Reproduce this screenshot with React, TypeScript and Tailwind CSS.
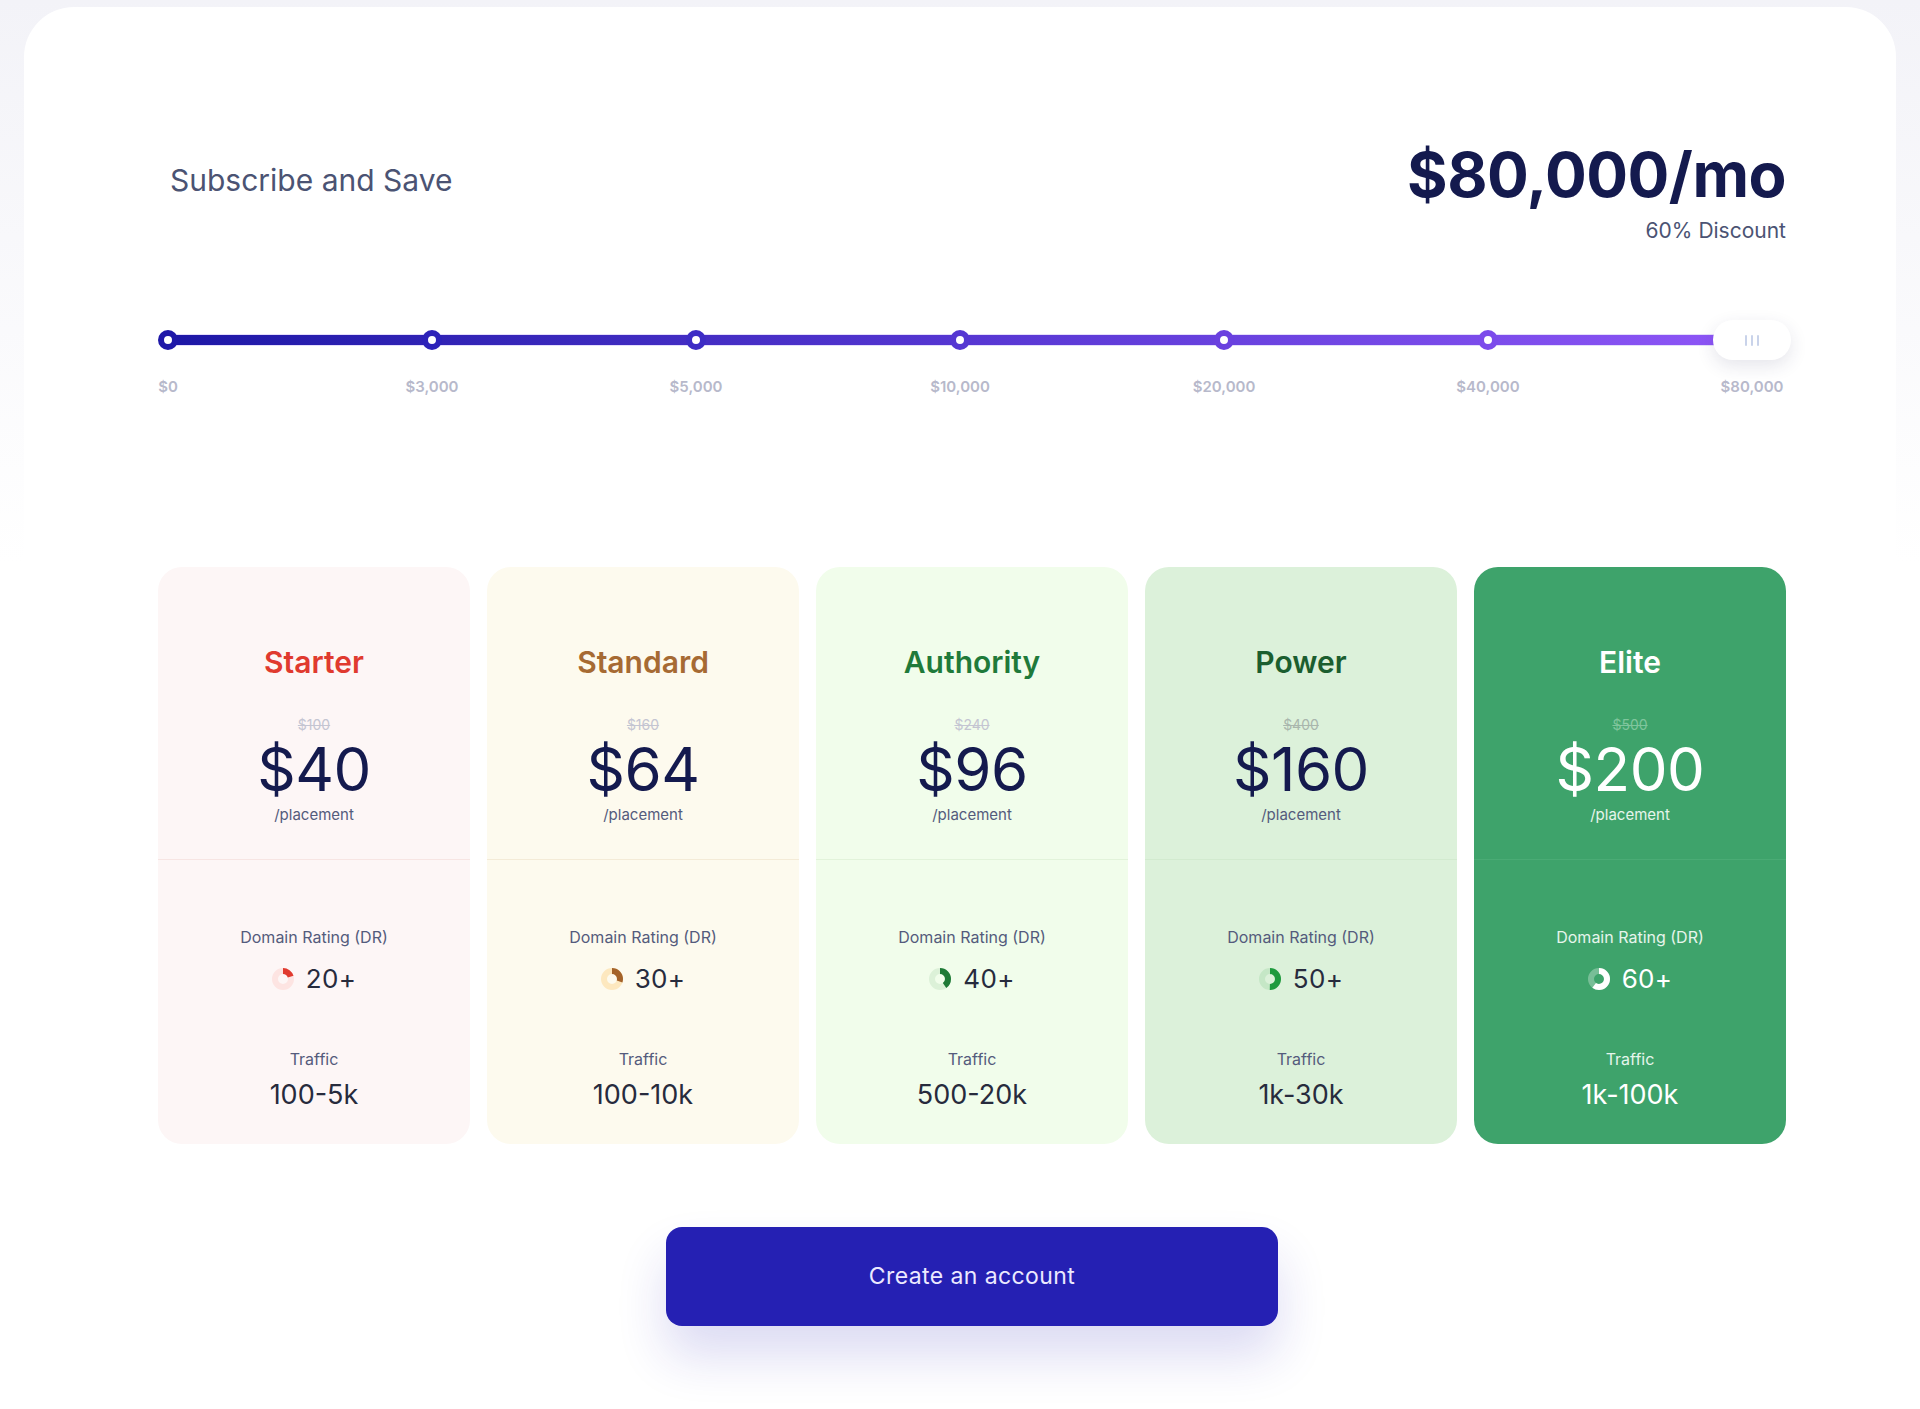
// App.tsx
/* Pricing page: monthly budget slider on top, five placement tiers below. */

type Tier = {
  name: string;
  oldPrice: string;
  price: string;
  dr: number;
  traffic: string;
  card: string;
  divider: string;
  title: string;
  strike: string;
  price_: string;
  muted: string;
  value: string;
  ringTrack: string;
  ringArc: string;
};

const tiers: Tier[] = [
  {
    name: "Starter",
    oldPrice: "$100",
    price: "$40",
    dr: 20,
    traffic: "100-5k",
    card: "bg-[#fdf6f6]",
    divider: "border-[#f7e5e3]",
    title: "text-[#e03a2f]",
    strike: "text-[#c4c5d2]",
    price_: "text-[#141a4e]",
    muted: "text-[#545b7c]",
    value: "text-[#272b3d]",
    ringTrack: "#fde4e2",
    ringArc: "#e03a2f",
  },
  {
    name: "Standard",
    oldPrice: "$160",
    price: "$64",
    dr: 30,
    traffic: "100-10k",
    card: "bg-[#fdfaee]",
    divider: "border-[#f4ebd7]",
    title: "text-[#a66a33]",
    strike: "text-[#c4c5d2]",
    price_: "text-[#141a4e]",
    muted: "text-[#545b7c]",
    value: "text-[#272b3d]",
    ringTrack: "#fde8bf",
    ringArc: "#a4632a",
  },
  {
    name: "Authority",
    oldPrice: "$240",
    price: "$96",
    dr: 40,
    traffic: "500-20k",
    card: "bg-[#f1fdeb]",
    divider: "border-[#e2f3da]",
    title: "text-[#1f7a3a]",
    strike: "text-[#c4c5d2]",
    price_: "text-[#141a4e]",
    muted: "text-[#545b7c]",
    value: "text-[#272b3d]",
    ringTrack: "#dcf1d8",
    ringArc: "#1e7a36",
  },
  {
    name: "Power",
    oldPrice: "$400",
    price: "$160",
    dr: 50,
    traffic: "1k-30k",
    card: "bg-[#dcf1da]",
    divider: "border-[#d2eacf]",
    title: "text-[#1b5e2f]",
    strike: "text-[#a9b6ad]",
    price_: "text-[#141a4e]",
    muted: "text-[#545b7c]",
    value: "text-[#272b3d]",
    ringTrack: "#c5e7c6",
    ringArc: "#1f9a3e",
  },
  {
    name: "Elite",
    oldPrice: "$500",
    price: "$200",
    dr: 60,
    traffic: "1k-100k",
    card: "bg-[#3ea36b]",
    divider: "border-[#4aab75]",
    title: "text-white",
    strike: "text-[#7fc59c]",
    price_: "text-white",
    muted: "text-[#e6f5ec]",
    value: "text-white",
    ringTrack: "rgba(255,255,255,0.3)",
    ringArc: "#ffffff",
  },
];

const steps = [
  { label: "$0", color: "border-[#1f18a8]" },
  { label: "$3,000", color: "border-[#2d22b9]" },
  { label: "$5,000", color: "border-[#3d2cc5]" },
  { label: "$10,000", color: "border-[#5537d2]" },
  { label: "$20,000", color: "border-[#6a41df]" },
  { label: "$40,000", color: "border-[#7c4beb]" },
  { label: "$80,000", color: "" },
];

const Ring = ({ pct, track, arc }: { pct: number; track: string; arc: string }) => {
  // small donut showing the domain rating share
  const c = 2 * Math.PI * 8;
  return (
    <svg width="22" height="22" viewBox="0 0 22 22" className="shrink-0">
      <circle cx="11" cy="11" r="8" fill="none" stroke={track} strokeWidth="6" />
      <circle
        cx="11"
        cy="11"
        r="8"
        fill="none"
        stroke={arc}
        strokeWidth="6"
        strokeDasharray={`${(pct / 100) * c} ${c}`}
        transform="rotate(-90 11 11)"
      />
    </svg>
  );
};

const TierCard = ({ tier }: { tier: Tier }) => {
  return (
    <div className={`flex flex-col rounded-3xl text-center ${tier.card}`}>
      <div className={`flex h-[293px] flex-col items-center border-b pt-[77px] ${tier.divider}`}>
        <h3 className={`text-[30px] leading-[36px] font-semibold ${tier.title}`}>{tier.name}</h3>
        <span className={`mt-[35px] text-[14px] leading-[20px] line-through ${tier.strike}`}>
          {tier.oldPrice}
        </span>
        <span className={`mt-[4px] text-[60px] leading-[60px] font-normal tracking-[-0.5px] ${tier.price_}`}>
          {tier.price}
        </span>
        <span className={`mt-[6px] text-[15px] leading-[20px] ${tier.muted}`}>/placement</span>
      </div>
      <div className="flex flex-col items-center pt-[65px] pb-[33px]">
        <span className={`text-[16px] leading-[24px] ${tier.muted}`}>Domain Rating (DR)</span>
        <div className="mt-[14px] flex h-[32px] items-center gap-[12px]">
          <Ring pct={tier.dr} track={tier.ringTrack} arc={tier.ringArc} />
          <span className={`text-[26px] leading-[32px] tracking-[0.3px] ${tier.value}`}>{tier.dr}+</span>
        </div>
        <span className={`mt-[52px] text-[16px] leading-[24px] ${tier.muted}`}>Traffic</span>
        <span className={`mt-[8px] text-[27px] leading-[32px] ${tier.value}`}>{tier.traffic}</span>
      </div>
    </div>
  );
};

const BudgetSlider = () => {
  return (
    <div className="w-[1604px]">
      <div className="relative flex h-[40px] items-center justify-between">
        {/* track behind the stops */}
        <div className="absolute top-[15px] right-[10px] left-[10px] h-[10px] rounded-full bg-gradient-to-r from-[#1d17a6] via-[#5636d2] to-[#8f56f7] ring-1 ring-[#e4ddfb]" />
        {steps.map((step, i) =>
          i === steps.length - 1 ? (
            <div key={step.label} className="relative flex w-[20px] justify-center">
              <div className="flex h-[40px] w-[78px] shrink-0 items-center justify-center gap-[4px] rounded-full bg-white shadow-[0_6px_18px_rgba(40,40,90,0.12)]">
                <span className="h-[11px] w-[2px] rounded bg-[#c9d3ea]" />
                <span className="h-[11px] w-[2px] rounded bg-[#c9d3ea]" />
                <span className="h-[11px] w-[2px] rounded bg-[#c9d3ea]" />
              </div>
            </div>
          ) : (
            <div
              key={step.label}
              className={`relative h-[20px] w-[20px] rounded-full border-[6px] bg-white ${step.color}`}
            />
          )
        )}
      </div>
      <div className="mt-[17px] flex justify-between">
        {steps.map((step) => (
          <div key={step.label} className="flex w-[20px] justify-center">
            <span className="text-[15px] leading-[20px] font-semibold whitespace-nowrap text-[#b7b9cb]">
              {step.label}
            </span>
          </div>
        ))}
      </div>
    </div>
  );
};

export default function App() {
  return (
    <div
      className="min-h-[1409px] bg-gradient-to-b from-[#f3f3f8] to-white to-[40%] px-[24px] pt-[7px] text-[#141a4e]"
      style={{ fontFamily: "Inter, 'Liberation Sans', sans-serif" }}
    >
      <div className="min-h-[1402px] rounded-t-[50px] bg-white">
        <div className="ml-[134px] w-[1628px] pt-[137px]">
          <div className="flex items-start justify-between">
            <h2 className="mt-[17px] ml-[12px] text-[30px] leading-[38px] text-[#4b5373]">
              Subscribe and Save
            </h2>
            <div className="flex flex-col items-end">
              <span className="text-[62px] leading-[62px] font-bold tracking-[-0.5px] text-[#141a4e]">
                $80,000/mo
              </span>
              <span className="mt-[11px] text-[21px] leading-[28px] text-[#4b5373]">60% Discount</span>
            </div>
          </div>

          <div className="mt-[75px]">
            <BudgetSlider />
          </div>

          <div className="mt-[170px] grid grid-cols-5 gap-[17px]">
            {tiers.map((tier) => (
              <TierCard key={tier.name} tier={tier} />
            ))}
          </div>

          <div className="mt-[83px] flex justify-center">
            <button className="h-[99px] w-[612px] rounded-[16px] bg-[#2520b3] text-[23px] font-normal tracking-[0.4px] text-[#ece9ff] shadow-[0_30px_50px_rgba(37,32,179,0.16)]">
              Create an account
            </button>
          </div>
        </div>
      </div>
    </div>
  );
}
